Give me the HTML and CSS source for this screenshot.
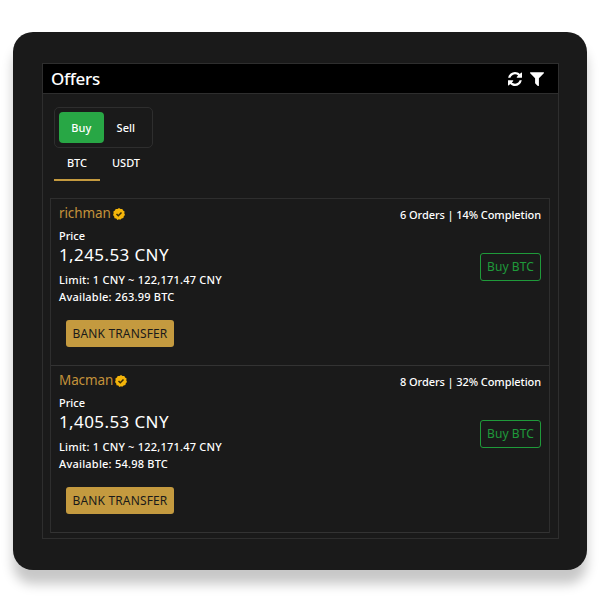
FILE: index.html
```html
<!DOCTYPE html>
<html lang="en">
<head>
<meta charset="utf-8">
<title>Offers</title>
<link rel="stylesheet" href="styles.css">
</head>
<body>
<main class="card">
  <section class="panel">
    <header class="panel-head">
      <h1 class="title">Offers</h1>
      <div class="head-icons">
        <svg class="icon" width="14" height="14" viewBox="0 0 1536 1536"><path fill="#fff" d="M1511 928q0 5-1 7-64 268-268 434.500T764 1536q-146 0-282.500-55T238 1324l-129 129q-19 19-45 19t-45-19-19-45V960q0-26 19-45t45-19h448q26 0 45 19t19 45-19 45l-137 137q71 66 161 102t187 36q134 0 250-65t186-179q11-17 53-117 8-23 30-23h192q13 0 22.500 9.500t9.500 22.500zm25-800v448q0 26-19 45t-45 19h-448q-26 0-45-19t-19-45 19-45l138-138Q969 256 768 256q-134 0-250 65T332 500q-11 17-53 117-8 23-30 23H50q-13 0-22.500-9.500T18 608v-7q65-268 270-434.500T768 0q146 0 284 55.500T1297 212l130-129q19-19 45-19t45 19 19 45z"/></svg>
        <svg class="icon" width="14" height="14" viewBox="0 0 1408 1408"><path fill="#fff" d="M1403 54q17 41-14 70L896 617v742q0 42-39 59-13 5-25 5-27 0-45-19L531 1148q-19-19-19-45V617L19 124q-31-29-14-70Q22 15 64 15h1280q42 0 59 39z"/></svg>
      </div>
    </header>
    <div class="panel-body">
      <div class="toggle">
        <button class="toggle-btn is-active">Buy</button>
        <button class="toggle-btn">Sell</button>
      </div>
      <nav class="tabs">
        <span class="tab is-current">BTC</span>
        <span class="tab">USDT</span>
      </nav>
      <div class="offers">
        <article class="offer">
          <div class="offer-top">
            <div class="trader"><span class="trader-name">richman</span>
              <svg class="badge" width="12" height="12" viewBox="0 0 12 12"><path fill="#f5b50a" d="M6 0l1.500 1 1.800-.1.800 1.600 1.500.9-.3 1.800.7 1.800-1.200 1.300-.4 1.800-1.800.3L7.200 11.800 6 11.300l-1.600.6-1.100-1.400-1.800-.3-.3-1.800L0 7.100l.6-1.700L.4 3.500l1.500-.9.800-1.700 1.800.1z"/><path fill="none" stroke="#3a2c05" stroke-width="1.500" d="M3.500 6l1.800 1.800 3.200-3.300"/></svg>
            </div>
            <div class="stats">6 Orders | 14% Completion</div>
          </div>
          <div class="offer-main">
            <div class="offer-info">
              <div class="label">Price</div>
              <div class="price">1,245.53 CNY</div>
              <div class="meta">Limit: 1 CNY ~ 122,171.47 CNY</div>
              <div class="meta">Available: 263.99 BTC</div>
            </div>
            <button class="buy-btn">Buy BTC</button>
          </div>
          <span class="method">BANK TRANSFER</span>
        </article>
        <article class="offer">
          <div class="offer-top">
            <div class="trader"><span class="trader-name">Macman</span>
              <svg class="badge" width="12" height="12" viewBox="0 0 12 12"><path fill="#f5b50a" d="M6 0l1.500 1 1.800-.1.800 1.600 1.500.9-.3 1.800.7 1.800-1.200 1.300-.4 1.800-1.800.3L7.200 11.800 6 11.300l-1.600.6-1.100-1.400-1.800-.3-.3-1.800L0 7.100l.6-1.700L.4 3.500l1.500-.9.800-1.700 1.800.1z"/><path fill="none" stroke="#3a2c05" stroke-width="1.500" d="M3.500 6l1.800 1.800 3.200-3.300"/></svg>
            </div>
            <div class="stats">8 Orders | 32% Completion</div>
          </div>
          <div class="offer-main">
            <div class="offer-info">
              <div class="label">Price</div>
              <div class="price">1,405.53 CNY</div>
              <div class="meta">Limit: 1 CNY ~ 122,171.47 CNY</div>
              <div class="meta">Available: 54.98 BTC</div>
            </div>
            <button class="buy-btn">Buy BTC</button>
          </div>
          <span class="method">BANK TRANSFER</span>
        </article>
      </div>
    </div>
  </section>
</main>
</body>
</html>
```
FILE: styles.css
```css
* { box-sizing: border-box; }
html, body { margin: 0; height: 600px; overflow: hidden; background: #fff; }
body {
  padding: 32px 13px 30px;
  font-family: "Noto Sans", "Open Sans", sans-serif;
  color: #fff;
}
.card {
  height: 538px;
  padding: 31px 28px 31px 29px;
  background: #1a1a1a;
  border-radius: 20px;
  box-shadow: 0 14px 12px rgba(0, 0, 0, .22);
}
.panel { height: 476px; border: 1px solid #2e2e2e; }
.panel-head {
  height: 30px;
  padding: 0 14px 0 8px;
  display: flex;
  align-items: center;
  justify-content: space-between;
  background: #000;
  border-bottom: 1px solid #2e2e2e;
}
.title { margin: 0; font-size: 17px; font-weight: 500; line-height: 29px; letter-spacing: -.3px; }
.head-icons { display: flex; align-items: center; gap: 8px; }
.icon { display: block; }
.panel-body { padding: 13px 8px 0 7px; }
.toggle {
  margin-left: 4px;
  width: 99px;
  height: 41px;
  padding: 4px;
  display: flex;
  border: 1px solid #2e2e2e;
  border-radius: 5px;
}
.toggle-btn {
  width: 45px;
  height: 31px;
  padding: 0;
  border: 0;
  border-radius: 4px;
  background: transparent;
  color: #fff;
  font: 500 11px "Noto Sans", sans-serif;
}
.toggle-btn.is-active { background: #28a745; }
.tabs { margin: 0 0 17px 4px; display: flex; height: 33px; }
.tab { width: 46px; padding-top: 7px; text-align: center; font-size: 11px; font-weight: 500; line-height: 16px; }
.tab + .tab { width: 52px; }
.tab.is-current { border-bottom: 2px solid #c49a3f; }
.offers { border: 1px solid #2e2e2e; border-bottom: 0; height: 335px; }
.offer { height: 167px; padding: 4px 8px 0; border-bottom: 1px solid #333; }
.offer-top { display: flex; justify-content: space-between; align-items: flex-start; height: 20px; }
.trader { display: flex; align-items: center; gap: 2px; }
.trader-name { font-size: 13.5px; line-height: 20px; color: #c4923a; letter-spacing: -.1px; }
.badge { display: block; margin-top: 2px; }
.stats { padding-top: 4px; font-size: 11px; line-height: 16px; font-weight: 500; letter-spacing: -.08px; }
.offer-main { display: flex; justify-content: space-between; align-items: center; margin-top: 5px; }
.label, .meta { font-size: 11px; font-weight: 500; line-height: 17px; letter-spacing: .22px; }
.label { line-height: 16px; letter-spacing: 0; }
.price { font-size: 17px; line-height: 22px; margin-bottom: 5px; letter-spacing: .4px; }
.buy-btn {
  width: 61px;
  height: 28px;
  padding: 0;
  background: transparent;
  border: 1px solid #1f9a3a;
  border-radius: 3px;
  color: #1f9a3a;
  font: 400 12px "Noto Sans", sans-serif;
  letter-spacing: .1px;
}
.method {
  display: block;
  width: 108px;
  height: 27px;
  margin: 15px 0 0 7px;
  background: #c49a3f;
  border-radius: 3px;
  color: #1a1a1a;
  font-size: 12px;
  line-height: 27px;
  text-align: center;
  letter-spacing: .15px;
}
```
